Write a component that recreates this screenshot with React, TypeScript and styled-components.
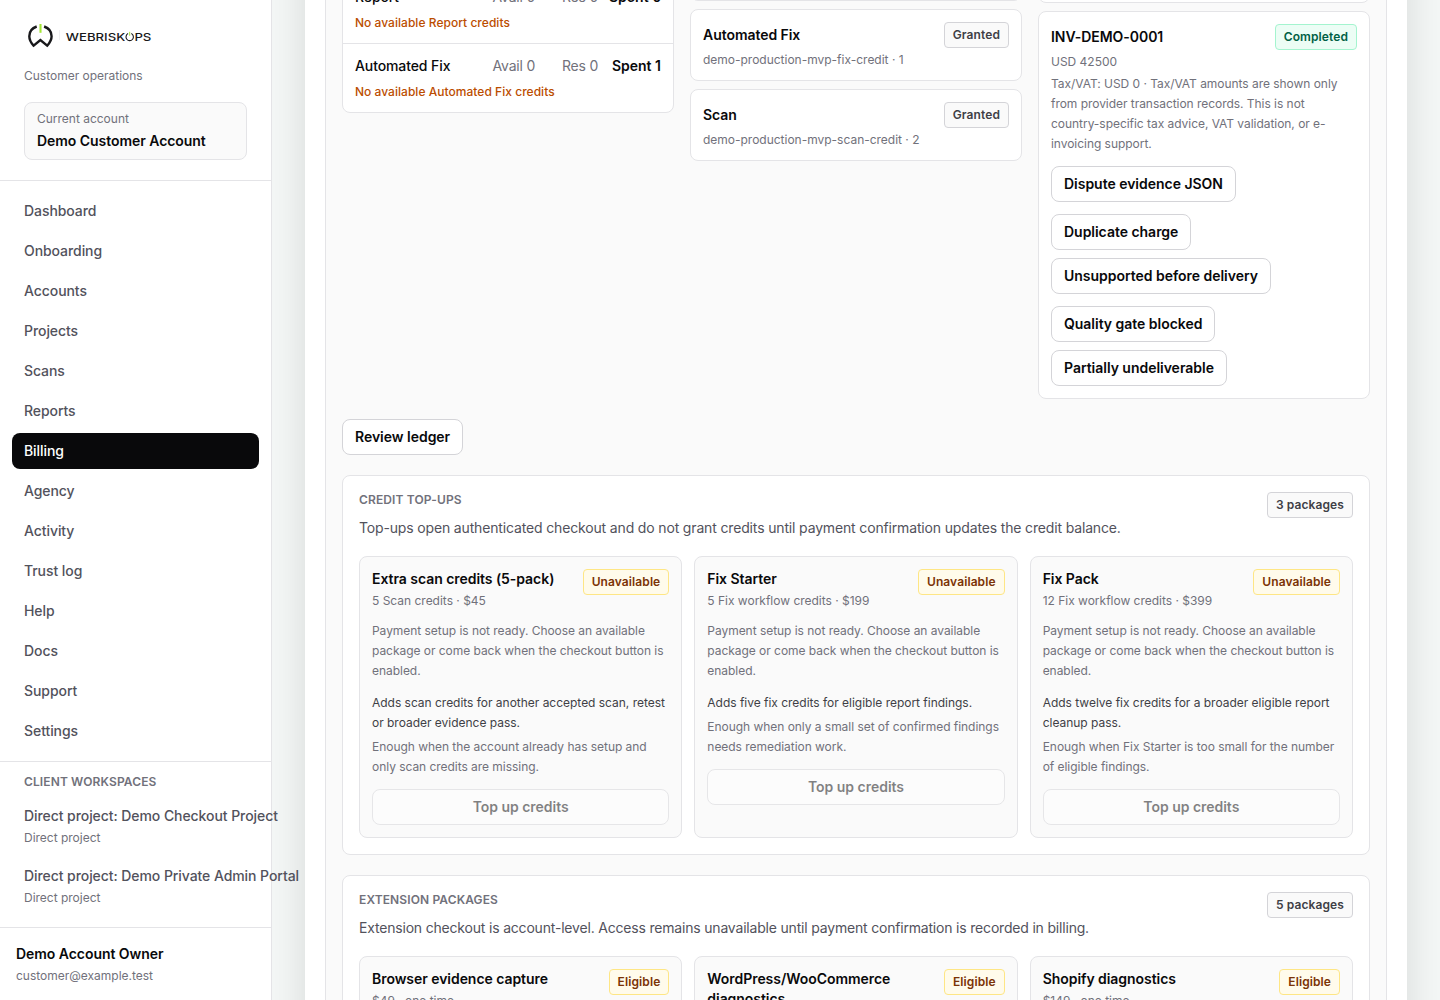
import React from "react";
import styled, { createGlobalStyle } from "styled-components";

const Global = createGlobalStyle`
  *, *::before, *::after { box-sizing: border-box; }
  body { margin: 0; font-family: Inter, "Liberation Sans", sans-serif; color: #09090b; background: #f4f7f6; }
  p, h2, h3 { margin: 0; }
  button { font-family: inherit; }
`;

const Shell = styled.div`
  display: grid;
  grid-template-columns: 272px minmax(0, 1fr);
  height: 1000px;
  overflow: hidden;
`;

const Sidebar = styled.aside`
  position: relative;
  z-index: 1;
  display: flex;
  flex-direction: column;
  height: 1000px;
  border-right: 1px solid #e4e4e7;
  background: #fff;
`;

const Brand = styled.div`
  height: 181px;
  padding: 20px 24px;
  border-bottom: 1px solid #e4e4e7;
`;

const Logo = styled.svg`
  display: block;
  width: 132px;
  height: 32px;
  margin-bottom: 16px;
`;

const Caption = styled.p<{ $tone?: string; $weight?: number; $gap?: number }>`
  margin-top: ${(p) => p.$gap ?? 0}px;
  font-size: 12px;
  line-height: 16px;
  font-weight: ${(p) => p.$weight ?? 400};
  letter-spacing: ${(p) => (p.$weight ? "0.03px" : "-0.01px")};
  color: ${(p) => p.$tone ?? "#71717b"};
`;

const Copy = styled(Caption)`
  line-height: 20px;
  letter-spacing: ${(p) => (p.$tone ? "-0.02px" : "-0.04px")};
`;

const NoBreak = styled.span`
  white-space: nowrap;
`;

const Strong = styled.p<{ $gap?: number }>`
  margin-top: ${(p) => p.$gap ?? 0}px;
  font-size: 14px;
  line-height: 20px;
  font-weight: 600;
  letter-spacing: -0.05px;
`;

const AccountBox = styled.div`
  width: 223px;
  margin-top: 18px;
  padding: 8px 12px;
  border: 1px solid #e4e4e7;
  border-radius: 8px;
  background: #fafafa;
`;

const Nav = styled.nav`
  display: grid;
  gap: 4px;
  padding: 12px;
`;

const NavItem = styled.a<{ $active?: boolean }>`
  height: 36px;
  padding: 8px 12px;
  border-radius: 8px;
  font-size: 14px;
  line-height: 20px;
  font-weight: 500;
  letter-spacing: -0.07px;
  color: ${(p) => (p.$active ? "#fff" : "#52525c")};
  background: ${(p) => (p.$active ? "#09090b" : "transparent")};
`;

const Workspaces = styled.div`
  flex: 1;
  padding: 12px;
  border-top: 1px solid #e4e4e7;
`;

const Eyebrow = styled.h2`
  font-size: 12px;
  line-height: 16px;
  font-weight: 600;
  letter-spacing: 0.12px;
  text-transform: uppercase;
  color: #71717b;
`;

const WorkspaceLabel = styled(Eyebrow)`
  padding: 0 12px;
  margin-bottom: 8px;
`;

const Workspace = styled.a`
  display: block;
  padding: 8px 12px;
  white-space: nowrap;
  font-size: 14px;
  line-height: 20px;
  font-weight: 500;
  letter-spacing: -0.07px;
  color: #52525c;
  & + & { margin-top: 4px; }
`;

const Owner = styled.div`
  padding: 16px;
  border-top: 1px solid #e4e4e7;
`;

const Main = styled.main`
  padding: 0 33px;
  min-width: 0;
`;

const Panel = styled.div`
  height: 1200px;
  margin-top: -100px;
  padding: 100px 20px;
  background: #fff;
  box-shadow: 0 0 38px rgba(9, 9, 11, 0.12);
`;

const Section = styled.section`
  height: 1000px;
  padding: 0 16px;
  border: solid #e4e4e7;
  border-width: 0 1px;
  background: #fafafa;
  overflow: hidden;
`;

const Columns = styled.div`
  display: grid;
  grid-template-columns: repeat(3, minmax(0, 1fr));
  gap: 16px;
  align-items: start;
`;

const Stack = styled.div<{ $lift: number }>`
  display: grid;
  gap: 8px;
  margin-top: -${(p) => p.$lift}px;
`;

const Card = styled.div`
  padding: 12px;
  border: 1px solid #e4e4e7;
  border-radius: 8px;
  background: #fff;
`;

const Ledger = styled(Card)`
  padding: 0;
`;

const LedgerRow = styled.div`
  padding: 12px;
  & + & { border-top: 1px solid #e4e4e7; }
`;

const Figures = styled.div`
  display: grid;
  grid-template-columns: minmax(0, 1fr) 60px 52px 52px;
  column-gap: 11px;
  font-size: 14px;
  line-height: 20px;
  font-weight: 500;
  letter-spacing: -0.1px;
  white-space: nowrap;
`;

const Figure = styled.span<{ $strong?: boolean }>`
  text-align: right;
  font-weight: ${(p) => (p.$strong ? 600 : 400)};
  letter-spacing: ${(p) => (p.$strong ? "0" : "-0.22px")};
  color: ${(p) => (p.$strong ? "#09090b" : "#71717b")};
`;

const Split = styled.div<{ $center?: boolean }>`
  display: flex;
  align-items: ${(p) => (p.$center ? "center" : "flex-start")};
  justify-content: space-between;
  gap: 12px;
`;

const tones = {
  neutral: ["#d4d4d8", "#fafafa", "#3f3f46"],
  green: ["#a4f4cf", "#ecfdf5", "#006045"],
  amber: ["#fee685", "#fffbeb", "#7b3306"],
};

const Badge = styled.span<{ $tone: keyof typeof tones }>`
  flex-shrink: 0;
  padding: 4px 8px;
  border: 1px solid ${(p) => tones[p.$tone][0]};
  border-radius: 4px;
  background: ${(p) => tones[p.$tone][1]};
  color: ${(p) => tones[p.$tone][2]};
  font-size: 12px;
  line-height: 16px;
  font-weight: 600;
  letter-spacing: 0.1px;
`;

const Button = styled.button<{ $gap?: number; $wide?: boolean }>`
  display: block;
  width: ${(p) => (p.$wide ? "100%" : "fit-content")};
  height: 36px;
  margin-top: ${(p) => p.$gap ?? 0}px;
  padding: 0 12px;
  border: 1px solid #d4d4d8;
  border-radius: 8px;
  background: #fff;
  color: #09090b;
  font-size: 14px;
  line-height: 20px;
  font-weight: 600;
  letter-spacing: -0.025px;
  &:disabled { opacity: 0.5; }
`;

const Catalog = styled.section`
  margin-top: 20px;
  padding: 16px;
  border: 1px solid #e4e4e7;
  border-radius: 8px;
  background: #fff;
`;

const Lead = styled.p<{ $track: number }>`
  margin-top: 8px;
  font-size: 14px;
  line-height: 24px;
  letter-spacing: ${(p) => p.$track}px;
  color: #52525c;
`;

const Packages = styled.div`
  display: grid;
  grid-template-columns: repeat(3, minmax(0, 1fr));
  gap: 12px;
  margin-top: 16px;
`;

const PackageCard = styled(Card)`
  background: #fafafa;
`;

const navItems = ["Dashboard", "Onboarding", "Accounts", "Projects", "Scans", "Reports", "Billing", "Agency", "Activity", "Trust log", "Help", "Docs", "Support", "Settings"];
const workspaces = ["Direct project: Demo Checkout Project", "Direct project: Demo Private Admin Portal"];
const balances = [
  { name: "Report", spent: 0 },
  { name: "Automated Fix", spent: 1 },
];
const grants = [
  { name: "Automated Fix", ref: "demo-production-mvp-fix-credit · 1" },
  { name: "Scan", ref: "demo-production-mvp-scan-credit · 2" },
];
const topUps = [
  { name: "Extra scan credits (5-pack)", detail: "5 Scan credits · $45", adds: "Adds scan credits for another accepted scan, retest or broader evidence pass.", fit: "Enough when the account already has setup and only scan credits are missing." },
  { name: "Fix Starter", detail: "5 Fix workflow credits · $199", adds: "Adds five fix credits for eligible report findings.", fit: "Enough when only a small set of confirmed findings needs remediation work." },
  { name: "Fix Pack", detail: "12 Fix workflow credits · $399", adds: "Adds twelve fix credits for a broader eligible report cleanup pass.", fit: "Enough when Fix Starter is too small for the number of eligible findings." },
];
const extensions = [
  { name: "Browser evidence capture", detail: "$49 · one time" },
  { name: "WordPress/WooCommerce diagnostics", detail: "" },
  { name: "Shopify diagnostics", detail: "$149 · one time" },
];

function BrandLogo() {
  return (
    <Logo viewBox="0 0 132 32" role="img" aria-label="WebRiskOps">
      <path d="M12.7 6.5C7.6 8.3 5.3 12.4 5.3 16.2C5.3 20 7.2 23 9.6 25.6L16.4 20L23.2 25.6C25.6 23 27.6 20 27.6 16.2C27.6 12.4 25.2 8.3 20.1 6.5" fill="none" stroke="#18181b" strokeWidth="2.4" />
      <path d="M16.5 4V12.8" stroke="#a3e635" strokeWidth="2.1" />
      <path d="M35.5 10V20" stroke="#e4e4e7" strokeWidth="0.6" />
      <g fontFamily="Inter, sans-serif" fontSize="10.7" fontWeight="500" fill="#18181b">
        <text x="41.8" y="20.5" textLength="59.4" lengthAdjust="spacingAndGlyphs">WEBRISK</text>
        <text x="110.4" y="20.5" textLength="17" lengthAdjust="spacingAndGlyphs">PS</text>
      </g>
      <path d="M104.1 13.6A3.7 3.7 0 1 0 107.3 13.6" fill="none" stroke="#18181b" strokeWidth="1.1" />
      <path d="M105.7 11.8V15.8" stroke="#a3e635" strokeWidth="1" />
    </Logo>
  );
}

export default function App() {
  return (
    <Shell>
      <Global />
      <Sidebar>
        <Brand>
          <BrandLogo />
          <Caption>Customer operations</Caption>
          <AccountBox>
            <Caption>Current account</Caption>
            <Strong $gap={4}>Demo Customer Account</Strong>
          </AccountBox>
        </Brand>
        <Nav>
          {navItems.map((item) => (
            <NavItem key={item} $active={item === "Billing"}>{item}</NavItem>
          ))}
        </Nav>
        <Workspaces>
          <WorkspaceLabel>Client workspaces</WorkspaceLabel>
          {workspaces.map((name) => (
            <Workspace key={name}>
              {name}
              <Caption $gap={4}>Direct project</Caption>
            </Workspace>
          ))}
        </Workspaces>
        <Owner>
          <Strong>Demo Account Owner</Strong>
          <Caption $gap={4}>customer@example.test</Caption>
        </Owner>
      </Sidebar>
      <Main>
        <Panel>
          <Section>
            <Columns>
              <Stack $lift={26}>
                <Ledger>
                  {balances.map((b) => (
                    <LedgerRow key={b.name}>
                      <Figures>
                        <span>{b.name}</span>
                        <Figure>Avail 0</Figure>
                        <Figure>Res 0</Figure>
                        <Figure $strong>Spent {b.spent}</Figure>
                      </Figures>
                      <Caption $gap={8} $tone="#bb4d00" $weight={500}>No available {b.name} credits</Caption>
                    </LedgerRow>
                  ))}
                </Ledger>
              </Stack>
              <Stack $lift={25}>
                <Card />
                {grants.map((g) => (
                  <Card key={g.name}>
                    <Split $center>
                      <Strong>{g.name}</Strong>
                      <Badge $tone="neutral">Granted</Badge>
                    </Split>
                    <Caption $gap={4}>{g.ref}</Caption>
                  </Card>
                ))}
              </Stack>
              <Stack $lift={23}>
                <Card />
                <Card>
                  <Split $center>
                    <Strong>INV-DEMO-0001</Strong>
                    <Badge $tone="green">Completed</Badge>
                  </Split>
                  <Caption $gap={4}>USD 42500</Caption>
                  <Copy $gap={4}>
                    Tax/VAT: USD 0 · Tax/VAT amounts are shown only from provider transaction records. This is not <NoBreak>country-specific</NoBreak> tax advice, VAT validation, or e-<wbr />invoicing support.
                  </Copy>
                  <Button $gap={12}>Dispute evidence JSON</Button>
                  <Button $gap={12}>Duplicate charge</Button>
                  <Button $gap={8}>Unsupported before delivery</Button>
                  <Button $gap={12}>Quality gate blocked</Button>
                  <Button $gap={8}>Partially undeliverable</Button>
                </Card>
              </Stack>
            </Columns>
            <Button $gap={20}>Review ledger</Button>
            <Catalog>
              <Split>
                <div>
                  <Eyebrow>Credit top-ups</Eyebrow>
                  <Lead $track={-0.154}>Top-ups open authenticated checkout and do not grant credits until payment confirmation updates the credit balance.</Lead>
                </div>
                <Badge $tone="neutral">3 packages</Badge>
              </Split>
              <Packages>
                {topUps.map((t) => (
                  <PackageCard key={t.name}>
                    <Split>
                      <div>
                        <Strong>{t.name}</Strong>
                        <Caption $gap={4}>{t.detail}</Caption>
                      </div>
                      <Badge $tone="amber">Unavailable</Badge>
                    </Split>
                    <Copy $gap={12}>Payment setup is not ready. Choose an available package or come back when the checkout button is enabled.</Copy>
                    <Copy $gap={12} $tone="#3f3f46">{t.adds}</Copy>
                    <Copy $gap={4}>{t.fit}</Copy>
                    <Button $gap={12} $wide disabled>Top up credits</Button>
                  </PackageCard>
                ))}
              </Packages>
            </Catalog>
            <Catalog>
              <Split>
                <div>
                  <Eyebrow>Extension packages</Eyebrow>
                  <Lead $track={-0.19}>Extension checkout is account-level. Access remains unavailable until payment confirmation is recorded in billing.</Lead>
                </div>
                <Badge $tone="neutral">5 packages</Badge>
              </Split>
              <Packages>
                {extensions.map((e) => (
                  <PackageCard key={e.name}>
                    <Split>
                      <div>
                        <Strong>{e.name}</Strong>
                        {e.detail && <Caption $gap={4}>{e.detail}</Caption>}
                      </div>
                      <Badge $tone="amber">Eligible</Badge>
                    </Split>
                  </PackageCard>
                ))}
              </Packages>
            </Catalog>
          </Section>
        </Panel>
      </Main>
    </Shell>
  );
}
